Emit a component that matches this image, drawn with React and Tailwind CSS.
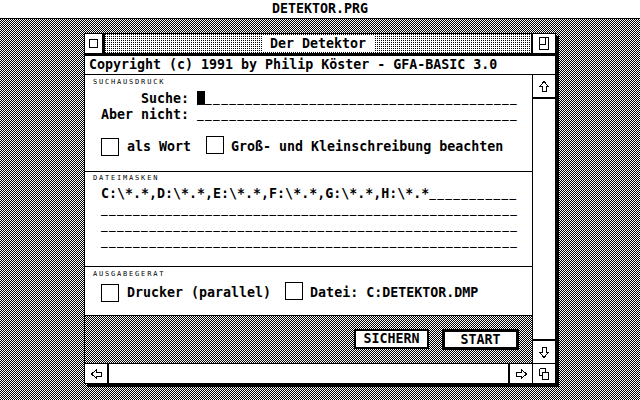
import React from 'react';

// 1-Pixel-Raster wie auf dem ST: zwei Streifenmuster, per Blend-Mode kombiniert
const desk = 'bg-[repeating-linear-gradient(90deg,#000_0_1px,#fff_1px_2px),repeating-linear-gradient(0deg,#000_0_1px,#fff_1px_2px)] bg-blend-difference';
const dots = 'bg-[repeating-linear-gradient(90deg,#000_0_1px,#fff_1px_2px),repeating-linear-gradient(0deg,#000_0_1px,#fff_1px_2px)] bg-blend-lighten';

const arrows = {
  up: { w: 10, h: 11, d: 'M5 0.5 L9.5 5.5 H7 V10.5 H3 V5.5 H0.5 Z' },
  down: { w: 10, h: 11, d: 'M5 10.5 L9.5 5.5 H7 V0.5 H3 V5.5 H0.5 Z' },
  left: { w: 11, h: 10, d: 'M0.5 5 L5.5 0.5 V3 H10.5 V7 H5.5 V9.5 Z' },
  right: { w: 11, h: 10, d: 'M10.5 5 L5.5 0.5 V3 H0.5 V7 H5.5 V9.5 Z' },
};

function Arrow({ dir }) {
  const a = arrows[dir];
  return (
    <svg width={a.w} height={a.h} viewBox={`0 0 ${a.w} ${a.h}`} shapeRendering="crispEdges">
      <path d={a.d} fill="none" stroke="#000" strokeWidth="1" />
    </svg>
  );
}

function Check() {
  return <span className="inline-block w-[18px] h-[18px] border border-black bg-white shrink-0" />;
}

// GEM-Editfeld: Unterstriche als Platzhalter
function Blank({ n }) {
  return (
    <span className="text-[11px] tracking-[1.4px] font-bold align-[1px]">{'_'.repeat(n)}</span>
  );
}

function Label({ children }) {
  return (
    <div className="h-[7px] leading-[7px] text-[7px] font-normal tracking-[1.8px] pl-[8px]">{children}</div>
  );
}

export default function App() {
  return (
    <div className={`w-[640px] h-[400px] overflow-hidden text-black font-['DejaVu_Sans_Mono',monospace] text-[13.3px] leading-[16px] font-bold ${desk}`}>
      {/* Menüzeile */}
      <div className="h-[19px] bg-white border-b border-black flex items-center justify-center">
        DETEKTOR.PRG
      </div>

      {/* Fenster */}
      <div className="mt-[14px] ml-[84px] w-[472px] h-[351px] border border-black bg-white shadow-[3px_3px_0_#000] flex flex-col">
        {/* Titelzeile */}
        <div className="h-[22px] border-b-[3px] border-black flex shrink-0">
          <div className="w-[20px] border-r-[3px] border-black bg-white flex items-center justify-center">
            <div className="w-[9px] h-[9px] border border-black" />
          </div>
          <div className={`flex-1 flex items-center justify-center ${dots}`}>
            <span className="bg-white px-[8px] h-[16px] flex items-center">Der Detektor</span>
          </div>
          <div className="w-[24px] border-l-2 border-black bg-white flex items-center justify-center">
            <svg width="10" height="13" viewBox="0 0 10 13" shapeRendering="crispEdges">
              <path d="M0.5 0.5 H9.5 V12.5 H0.5 Z M6.5 0.5 V7.5 H0.5" fill="none" stroke="#000" />
            </svg>
          </div>
        </div>

        {/* Infozeile */}
        <div className="h-[19px] border-b border-black pl-[4px] flex items-center shrink-0 whitespace-pre">
          Copyright (c) 1991 by Philip Köster - GFA-BASIC 3.0
        </div>

        <div className="flex-1 flex min-h-0">
          {/* Dialog */}
          <div className={`flex-1 flex flex-col ${desk}`}>
            <div className="h-[97px] bg-white border-b border-black pt-[4px]">
              <Label>SUCHAUSDRUCK</Label>
              <div className="mt-[5px] pl-[16px] whitespace-pre">
                <div>{'     Suche: '}<span className="bg-black text-white">_</span><Blank n={39} /></div>
                <div>{'Aber nicht: '}<Blank n={40} /></div>
              </div>
              <div className="mt-[13px] pl-[16px] flex items-center">
                <Check />
                <span className="ml-[8px]">als Wort</span>
                <span className="ml-[15px]"><Check /></span>
                <span className="ml-[7px]">Groß- und Kleinschreibung beachten</span>
              </div>
            </div>

            <div className="h-[95px] bg-white border-b border-black pt-[3px]">
              <Label>DATEIMASKEN</Label>
              <div className="mt-[4px] pl-[16px] whitespace-pre">
                <div>C:\*.*,D:\*.*,E:\*.*,F:\*.*,G:\*.*,H:\*.*<Blank n={11} /></div>
                <div><Blank n={52} /></div>
                <div><Blank n={52} /></div>
                <div><Blank n={52} /></div>
              </div>
            </div>

            <div className="h-[49px] bg-white border-b border-black pt-[4px]">
              <Label>AUSGABEGERAT</Label>
              <div className="mt-[4px] pl-[16px] flex items-center">
                <Check />
                <span className="ml-[8px]">Drucker (parallel)</span>
                <span className="ml-[14px]"><Check /></span>
                <span className="ml-[7px]">Datei: C:DETEKTOR.DMP</span>
              </div>
            </div>

            <div className="flex justify-end gap-[13px] pt-[13px] pr-[13px]">
              <button className="w-[75px] h-[20px] border-2 border-black bg-white flex items-center justify-center">
                SICHERN
              </button>
              <button className="w-[77px] h-[21px] border-[3px] border-black bg-white flex items-center justify-center">
                START
              </button>
            </div>
          </div>

          {/* Vertikaler Rollbalken */}
          <div className="w-[23px] border-l border-black flex flex-col bg-white">
            <div className="h-[24px] border-b-2 border-black flex items-center justify-center">
              <Arrow dir="up" />
            </div>
            <div className="flex-1" />
            <div className="h-[24px] border-t-2 border-black flex items-center justify-center">
              <Arrow dir="down" />
            </div>
          </div>
        </div>

        {/* Horizontaler Rollbalken */}
        <div className="h-[20px] border-t border-black flex shrink-0 bg-white">
          <div className="w-[24px] border-r-2 border-black flex items-center justify-center">
            <Arrow dir="left" />
          </div>
          <div className="flex-1" />
          <div className="w-[24px] border-l-2 border-black flex items-center justify-center">
            <Arrow dir="right" />
          </div>
          <div className="w-[23px] border-l border-black flex items-center justify-center">
            <svg width="10" height="12" viewBox="0 0 10 12" shapeRendering="crispEdges">
              <path d="M0.5 0.5 H6.5 V4.5 M3.5 7.5 H0.5 V0.5 M3.5 4.5 H9.5 V11.5 H3.5 Z" fill="none" stroke="#000" />
            </svg>
          </div>
        </div>
      </div>
    </div>
  );
}
